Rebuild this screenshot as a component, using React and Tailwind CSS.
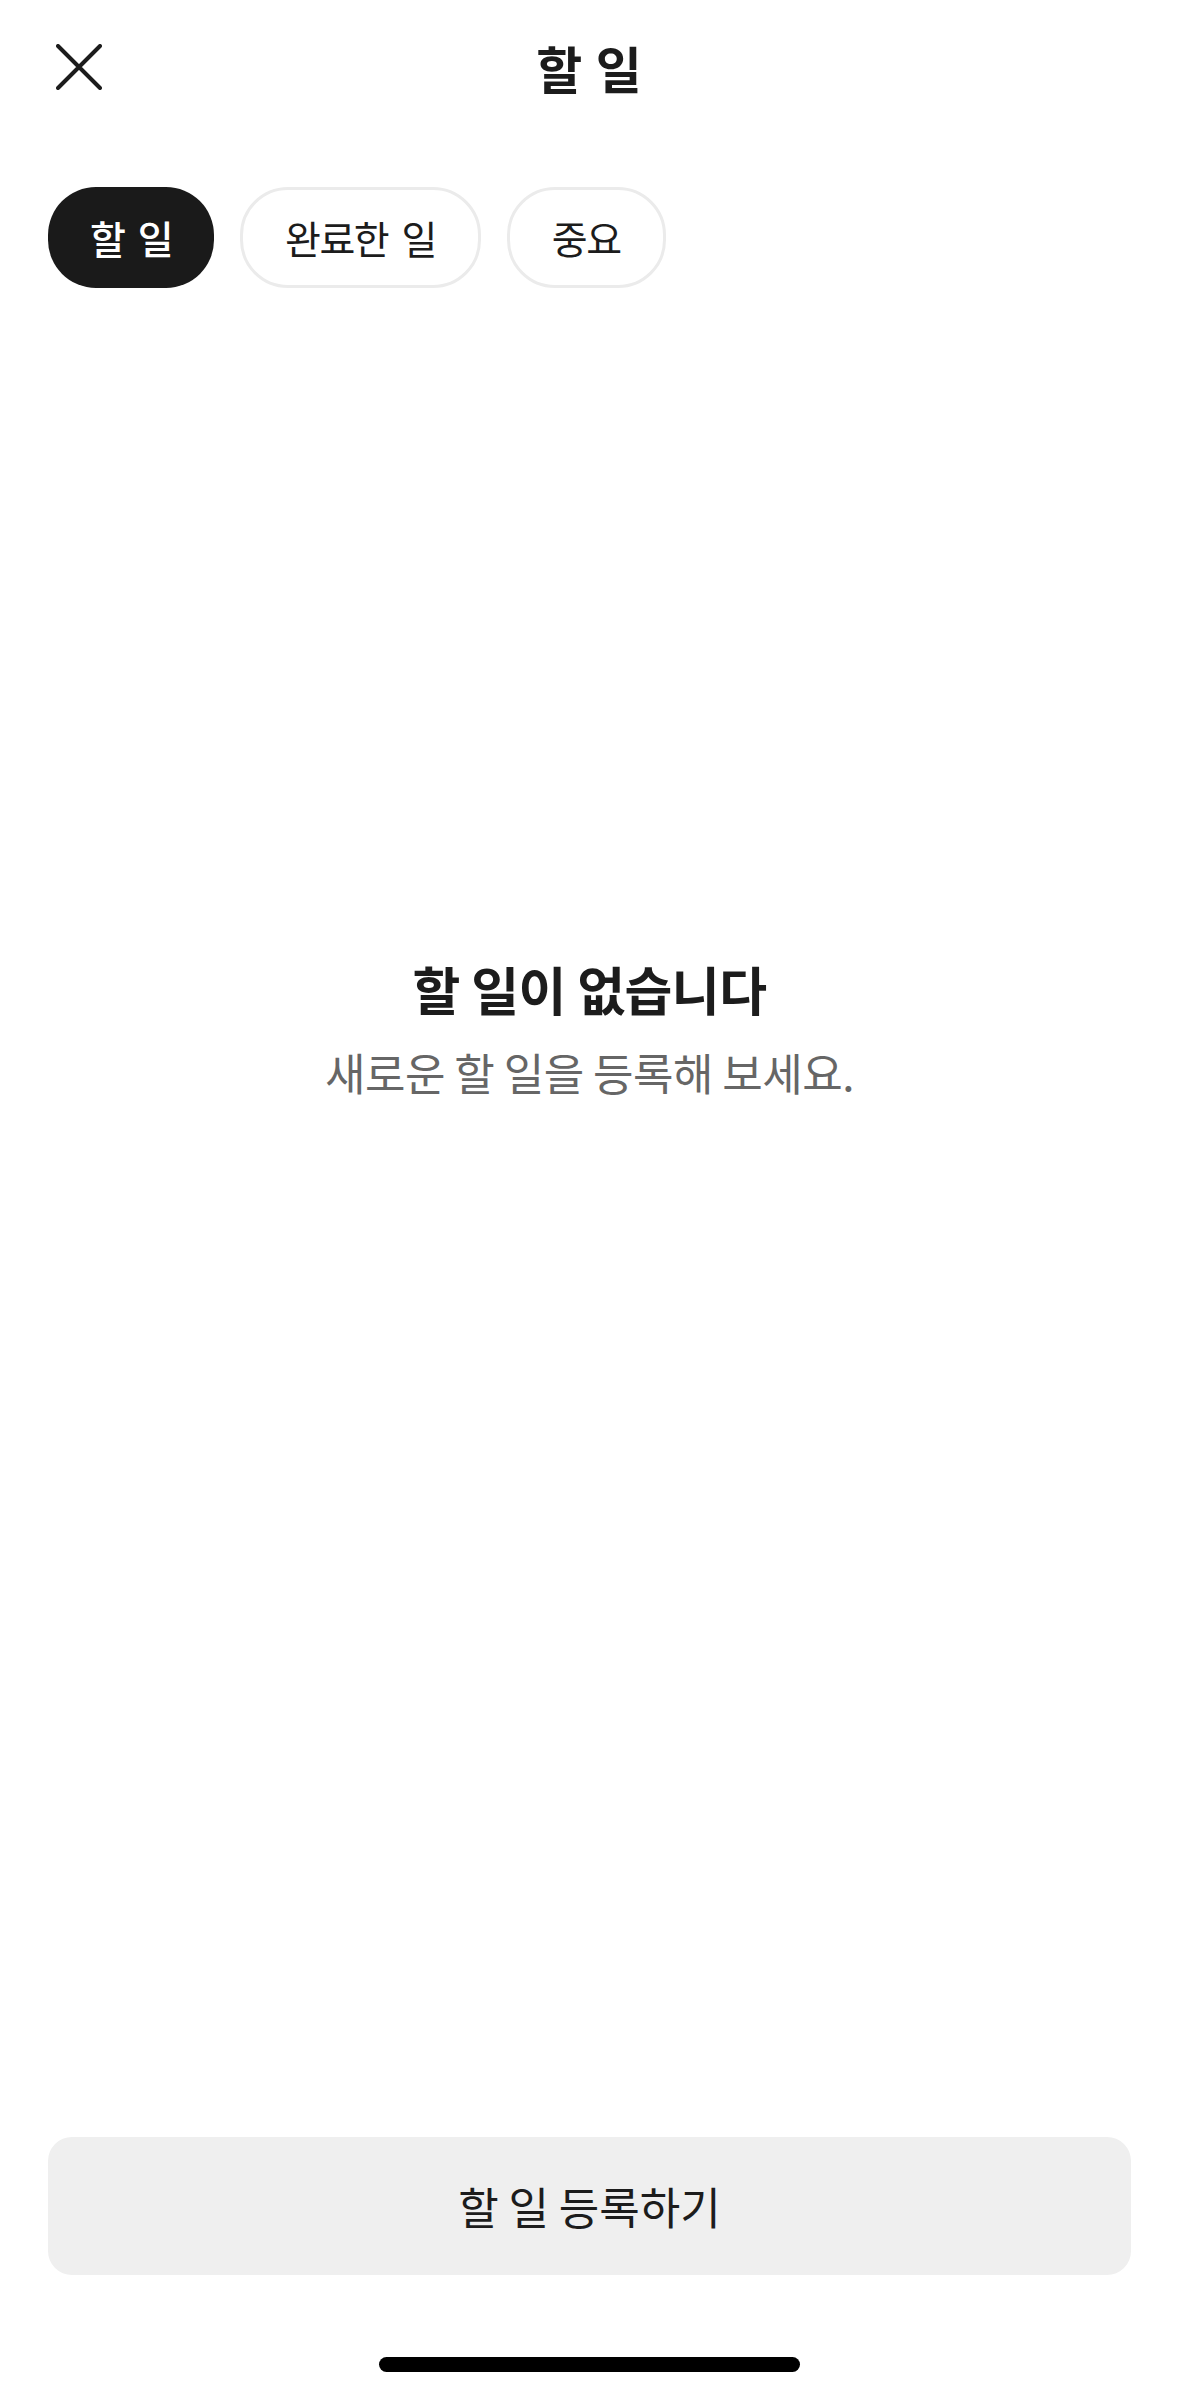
import React, { useState } from 'react'

const tabs = ['할 일', '완료한 일', '중요']

const CloseIcon = () => (
  <svg width="46" height="46" viewBox="0 0 46 46" fill="none">
    <path d="M2 2L44 44M44 2L2 44" stroke="#1c1c1c" strokeWidth="4" strokeLinecap="round" />
  </svg>
)

export default function App() {
  const [active, setActive] = useState(0)

  return (
    <div
      className="w-full h-[2396px] bg-white flex flex-col text-[#1c1c1c]"
      style={{ fontFamily: '"Noto Sans CJK KR", "Noto Sans", sans-serif' }}
    >
      {/* --- Header --- */}
      <div className="grid grid-cols-[1fr_auto_1fr] items-center h-[134px] px-[56px]">
        <button className="w-[46px] h-[46px] flex items-center justify-center">
          <CloseIcon />
        </button>
        <h1 className="text-[50px] font-bold leading-none tracking-[1px]">할 일</h1>
        <div />
      </div>

      {/* --- Tabs --- */}
      <div className="flex items-center gap-[26px] px-[48px] mt-[53px]">
        {tabs.map((t, i) => (
          <button
            key={t}
            onClick={() => setActive(i)}
            className={
              i === active
                ? 'h-[101px] px-[42px] rounded-[48px] bg-[#1a1a1a] text-white text-[39px] font-medium leading-none tracking-[-1.5px] [word-spacing:6px]'
                : 'h-[101px] px-[42px] rounded-[48px] bg-white border-[3px] border-[#ebebeb] text-[#1c1c1c] text-[39px] leading-none tracking-[-1.5px] [word-spacing:6px]'
            }
          >
            {t}
          </button>
        ))}
      </div>

      {/* --- Empty state --- */}
      <div className="flex flex-col items-center mt-[666px]">
        <p className="text-[52px] font-bold leading-[70px] tracking-[-0.5px]">할 일이 없습니다</p>
        <p className="text-[44px] text-[#666666] leading-[60px] mt-[18px] tracking-[-0.5px]">새로운 할 일을 등록해 보세요.</p>
      </div>

      <div className="flex-1" />

      {/* --- Bottom button --- */}
      <button className="mx-[48px] h-[138px] rounded-[24px] bg-[#efefef] text-[44px] text-[#1c1c1c]">
        할 일 등록하기
      </button>

      <div className="flex justify-center mt-[82px] mb-[24px]">
        <div className="w-[421px] h-[15px] rounded-full bg-black" />
      </div>
    </div>
  )
}
